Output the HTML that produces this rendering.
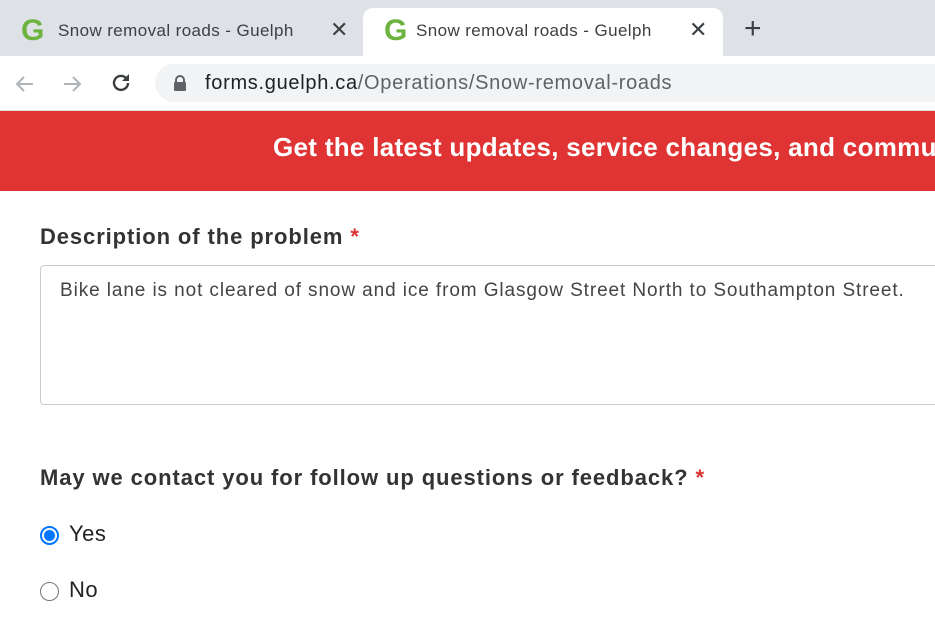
<!DOCTYPE html>
<html><head><style>
*{margin:0;padding:0;box-sizing:border-box}
body{width:935px;height:630px;overflow:hidden;background:#fff;font-family:"Liberation Sans",Arial,sans-serif;position:relative}
.tabbar{position:absolute;left:0;top:0;width:935px;height:56px;background:#dee1e6}
.tab{position:absolute;top:8px;height:48px;font-size:17px;color:#3c4043}
.tab .g{position:absolute;left:21px;top:6px;font-size:30px;color:#6cb33f;font-weight:bold}
.tab .t{position:absolute;left:58px;top:13px;letter-spacing:0.4px}
.tab .x{position:absolute;top:9px;font-size:22px;color:#3c4043}
.tab2{background:#fff;border-radius:10px 10px 0 0}
.toolbar{position:absolute;left:0;top:56px;width:935px;height:55px;background:#fff;border-bottom:1px solid #dadce0}
.omni{position:absolute;left:155px;top:8px;width:800px;height:38px;background:#f1f3f4;border-radius:19px}
.url{position:absolute;left:50px;top:8px;font-size:20px;color:#202124;letter-spacing:0.7px}
.url span{color:#5f6368}
.banner{position:absolute;left:0;top:111px;width:935px;height:80px;background:#e03333;color:#fff;font-weight:bold;font-size:26px;white-space:nowrap;overflow:hidden}
.banner div{position:absolute;left:273px;top:21px;letter-spacing:0.3px}
.lbl{position:absolute;left:40px;font-weight:bold;font-size:22px;color:#333;letter-spacing:0.9px}
.lbl b{color:#d33}
.ta{position:absolute;left:40px;top:265px;width:920px;height:140px;border:1px solid #ccc;border-radius:4px;font-size:19px;color:#444;padding:14px 19px;letter-spacing:0.9px;white-space:nowrap}
.r{position:absolute;left:40px;width:19px;height:19px;border-radius:50%;border:1px solid #767676}
.rl{position:absolute;left:69px;font-size:22px;color:#222;letter-spacing:0.5px}
</style></head><body>
<div class="tabbar">
 <div class="tab" style="left:0;width:362px"><span class="g">G</span><span class="t">Snow removal roads - Guelph</span><span class="x" style="left:330px">✕</span></div>
 <div class="tab tab2" style="left:363px;width:360px"><span class="g">G</span><span class="t" style="left:53px">Snow removal roads - Guelph</span><span class="x" style="left:326px">✕</span></div>
 <div style="position:absolute;left:744px;top:12px;font-size:30px;color:#3c4043">+</div>
</div>
<div class="toolbar">
 <svg style="position:absolute;left:13px;top:16px" width="24" height="24" viewBox="0 0 24 24"><path d="M20 12H5M11 5l-7 7 7 7" stroke="#b0b3b7" stroke-width="2" fill="none"/></svg>
 <svg style="position:absolute;left:60px;top:16px" width="24" height="24" viewBox="0 0 24 24"><path d="M4 12h15M13 5l7 7-7 7" stroke="#b0b3b7" stroke-width="2" fill="none"/></svg>
 <svg style="position:absolute;left:109px;top:15px" width="24" height="24" viewBox="0 0 24 24"><path d="M19 12a7 7 0 1 1-2-5" stroke="#3c4043" stroke-width="2.4" fill="none"/><path d="M20 3v7h-7z" fill="#3c4043"/></svg>
 <div class="omni">
  <svg style="position:absolute;left:18px;top:11px" width="14" height="16" viewBox="0 0 14 16"><path d="M3 7V5a4 4 0 0 1 8 0v2" stroke="#5f6368" stroke-width="2" fill="none"/><rect x="1" y="7" width="12" height="9" rx="1" fill="#5f6368"/></svg>
  <div class="url">forms.guelph.ca<span>/Operations/Snow-removal-roads</span></div>
 </div>
</div>
<div class="banner"><div>Get the latest updates, service changes, and community</div></div>
<div class="lbl" style="top:224px">Description of the problem <b>*</b></div>
<div class="ta">Bike lane is not cleared of snow and ice from Glasgow Street North to Southampton Street.</div>
<div class="lbl" style="top:465px">May we contact you for follow up questions or feedback? <b>*</b></div>
<div class="r" style="top:526px;border:2px solid #0075ff;background:radial-gradient(circle,#0075ff 5px,#fff 6px)"></div>
<div class="rl" style="top:521px">Yes</div>
<div class="r" style="top:582px"></div>
<div class="rl" style="top:577px">No</div>
</body></html>
